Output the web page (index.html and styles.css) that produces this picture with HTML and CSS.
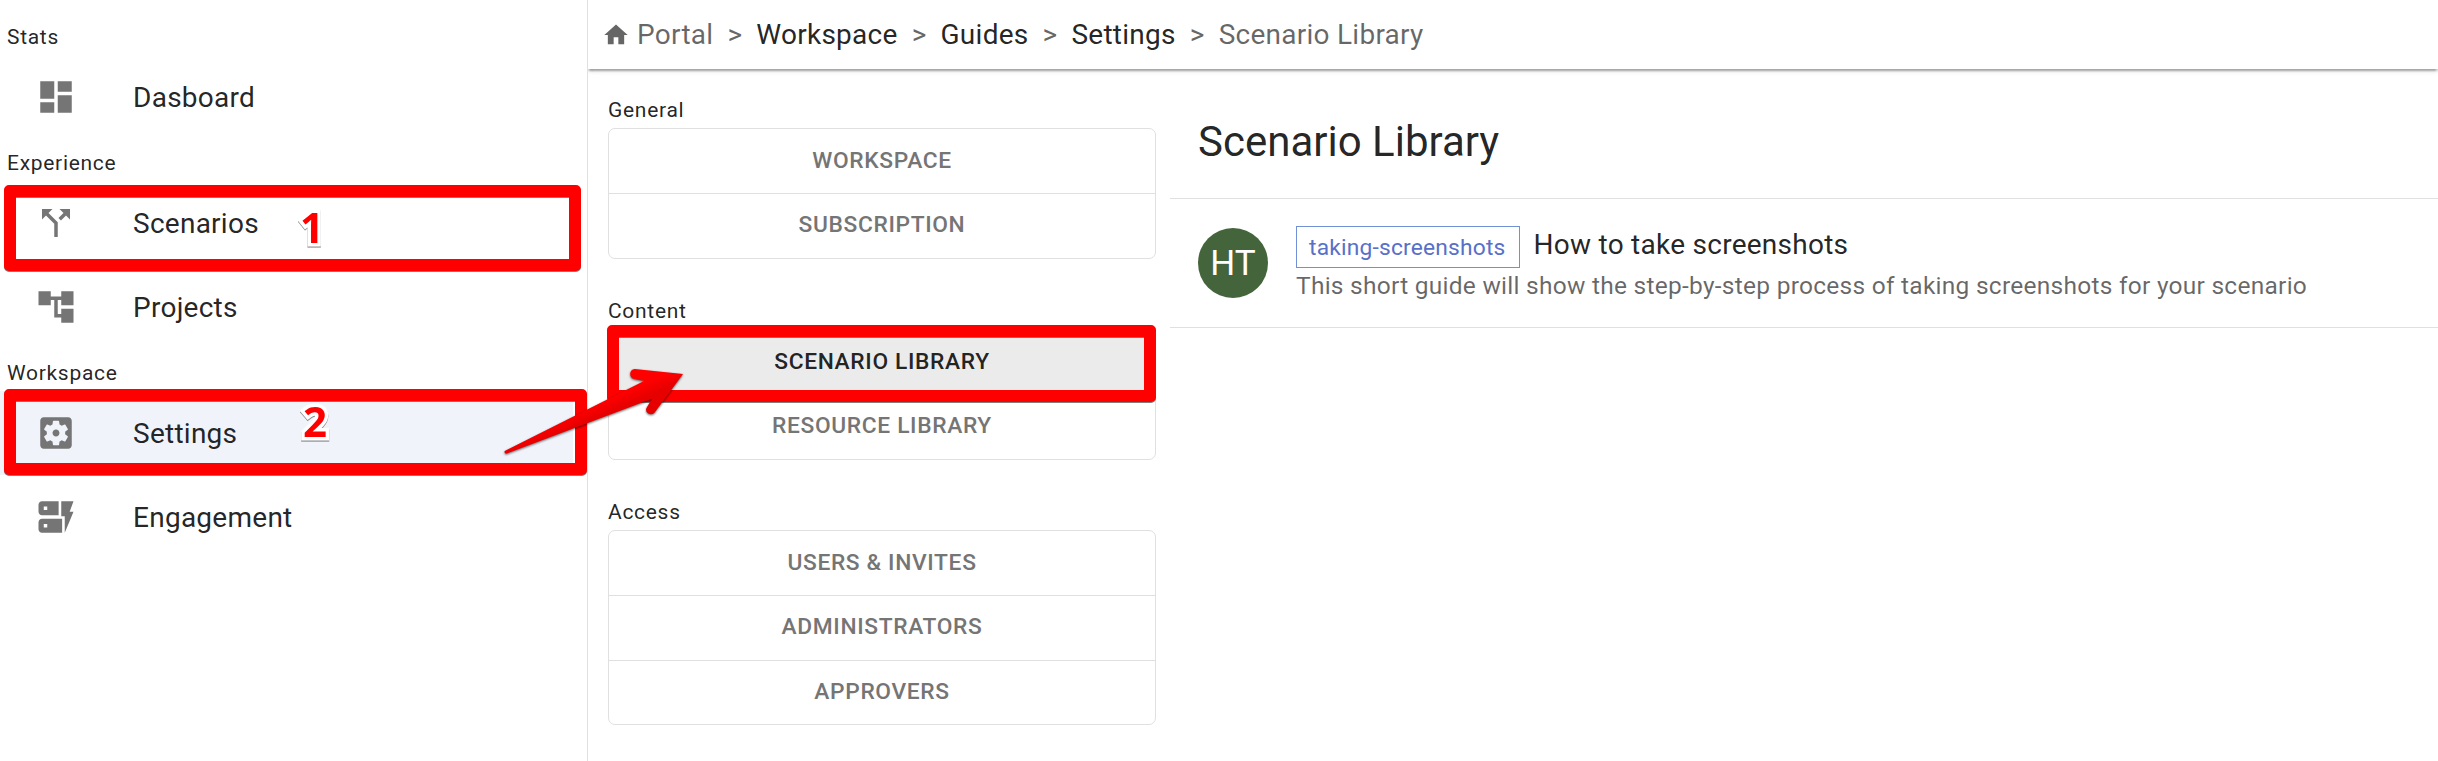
FILE: index.html
```html
<!DOCTYPE html>
<html lang="en">
<head>
<meta charset="utf-8">
<title>Scenario Library</title>
<link rel="stylesheet" href="styles.css">
</head>
<body>
<div class="app">
  <nav class="sidebar">
    <h2 class="side-label">Stats</h2>
    <a class="side-item"><svg class="icon" viewBox="0 0 24 24"><path d="M3 13h8V3H3v10zm0 8h8v-6H3v6zm10 0h8V11h-8v10zm0-18v6h8V3h-8z"/></svg>Dasboard</a>
    <h2 class="side-label">Experience</h2>
    <a class="side-item"><svg class="icon" viewBox="0 0 24 24"><path d="M14 4l2.29 2.29-2.88 2.88 1.42 1.42 2.88-2.88L20 10V4zm-4 0H4v6l2.29-2.29 4.71 4.7V20h2v-8.41l-5.29-5.3z"/></svg>Scenarios</a>
    <a class="side-item"><svg class="icon" viewBox="0 0 24 24"><path d="M22 11V3h-7v3H9V3H2v8h7V8h2v10h4v3h7v-8h-7v3h-2V8h2v3z"/></svg>Projects</a>
    <h2 class="side-label">Workspace</h2>
    <a class="side-item selected"><svg class="icon" viewBox="0 0 24 24"><path d="M12 10c-1.1 0-2 .9-2 2s.9 2 2 2 2-.9 2-2-.9-2-2-2zm7-7H5c-1.11 0-2 .9-2 2v14c0 1.1.89 2 2 2h14c1.11 0 2-.9 2-2V5c0-1.1-.89-2-2-2zm-1.75 9c0 .23-.02.46-.05.68l1.48 1.16c.13.11.17.3.08.45l-1.4 2.42c-.09.15-.27.21-.43.15l-1.74-.7c-.36.28-.76.51-1.18.69l-.26 1.85c-.03.17-.18.3-.35.3h-2.8c-.17 0-.32-.13-.35-.29l-.26-1.85c-.43-.18-.82-.41-1.18-.69l-1.74.7c-.16.06-.34 0-.43-.15l-1.4-2.42c-.09-.15-.05-.34.08-.45l1.48-1.16c-.03-.23-.05-.46-.05-.69 0-.23.02-.46.05-.68l-1.48-1.16c-.13-.11-.17-.3-.08-.45l1.4-2.42c.09-.15.27-.21.43-.15l1.74.7c.36-.28.76-.51 1.18-.69l.26-1.85c.03-.17.18-.3.35-.3h2.8c.17 0 .32.13.35.29l.26 1.85c.43.18.82.41 1.18.69l1.74-.7c.16-.06.34 0 .43.15l1.4 2.42c.09.15.05.34-.08.45l-1.48 1.16c.03.23.05.46.05.69z"/></svg>Settings</a>
    <a class="side-item"><svg class="icon" viewBox="0 0 24 24"><path fill-rule="evenodd" d="M13 11H4c-1.100 0-2-.9-2-2V5c0-1.100.9-2 2-2h9.500v8zM5 6v2h2V6zM15.500 13H4c-1.100 0-2 .9-2 2v4c0 1.100.9 2 2 2h11.500zM5 16v2h2v-2zM22 3h-7v8.500h2V21l5-12h-2.200z"/></svg>Engagement</a>
  </nav>

  <div class="main">
    <header class="topbar">
      <svg class="home" viewBox="0 0 24 24"><path d="M10 20v-6h4v6h5v-8h3L12 3 2 12h3v8z"/></svg>
      <span class="crumb muted">Portal</span><span class="sep">&gt;</span>
      <span class="crumb">Workspace</span><span class="sep">&gt;</span>
      <span class="crumb">Guides</span><span class="sep">&gt;</span>
      <span class="crumb">Settings</span><span class="sep">&gt;</span>
      <span class="crumb muted">Scenario Library</span>
    </header>

    <div class="columns">
      <aside class="menu">
        <section class="group">
          <h3 class="group-label">General</h3>
          <div class="buttons"><button>WORKSPACE</button><button>SUBSCRIPTION</button></div>
        </section>
        <section class="group">
          <h3 class="group-label">Content</h3>
          <div class="buttons"><button class="active">SCENARIO LIBRARY</button><button>RESOURCE LIBRARY</button></div>
        </section>
        <section class="group">
          <h3 class="group-label">Access</h3>
          <div class="buttons"><button>USERS &amp; INVITES</button><button>ADMINISTRATORS</button><button>APPROVERS</button></div>
        </section>
      </aside>

      <main class="content">
        <h1 class="title">Scenario Library</h1>
        <article class="entry">
          <div class="avatar">HT</div>
          <div class="entry-text">
            <div class="entry-head"><span class="chip">taking-screenshots</span><span class="entry-name">How to take screenshots</span></div>
            <p class="entry-desc">This short guide will show the step-by-step process of taking screenshots for your scenario</p>
          </div>
        </article>
      </main>
    </div>
  </div>

  <div class="mark mark-scenarios"></div>
  <div class="mark mark-settings"></div>
  <div class="mark mark-library"></div>
  <span class="step step-one">1</span>
  <span class="step step-two">2</span>
  <svg class="arrow" viewBox="0 0 660 360">
    <defs><linearGradient id="shade" x1="300" y1="140" x2="325" y2="200" gradientUnits="userSpaceOnUse"><stop offset="0.4" stop-color="#ff0000"/><stop offset="1" stop-color="#e60000"/></linearGradient></defs>
    <path fill="url(#shade)" d="M44 303 L462 93 L432 87 C416 83 417 58 434 57 L579 72 L495 186 C487 199 464 192 469 175 L486 146 L48 311 Q42 310 44 303Z"/>
  </svg>
</div>
</body>
</html>
```
FILE: styles.css
```css
* { box-sizing: border-box; }
body { margin: 0; background: #fff; color: rgba(0, 0, 0, 0.87); font-family: Roboto, sans-serif; overflow: hidden; }
h1, h2, h3, p { margin: 0; font-weight: 400; }

.app { position: relative; display: flex; width: 100%; height: 761px; }

.sidebar { width: 588px; flex: none; padding-top: 13px; border-right: 1px solid #e0e0e0; }
.side-label { height: 42px; padding: 6px 0 0 7px; font-size: 21px; line-height: 36px; letter-spacing: 0.7px; }
.side-item { display: flex; align-items: center; gap: 56px; width: 573px; height: 84px; padding-left: 35px; font-size: 28px; letter-spacing: 0.26px; }
.side-item.selected { background: #f1f3fb; }
.icon { width: 42px; height: 42px; fill: #757575; flex: none; }

.main { flex: 1; min-width: 0; display: flex; flex-direction: column; }
.topbar { display: flex; align-items: center; height: 69px; padding-left: 14px; font-size: 28px; letter-spacing: 0.26px; box-shadow: 0 3.5px 1.75px -1.75px rgba(0, 0, 0, 0.2), 0 1.75px 1.75px rgba(0, 0, 0, 0.14), 0 1.75px 5.25px rgba(0, 0, 0, 0.12); clip-path: inset(0 0 -10px 0); }
.home { width: 28px; height: 28px; margin-right: 7px; fill: #666; }
.muted, .sep { color: rgba(0, 0, 0, 0.6); }
.sep { margin: 0 14px; }

.columns { display: flex; flex: 1; }
.menu { width: 568px; flex: none; padding: 23px 0 0 20px; }
.group { height: 201px; }
.group-label { height: 36px; font-size: 21px; line-height: 36px; letter-spacing: 0.7px; }
.buttons { display: flex; flex-direction: column; border: 1px solid #e0e0e0; border-radius: 7px; overflow: hidden; }
.buttons button { height: 64.5px; padding: 0 0 2px; border: 0; border-top: 1px solid #e0e0e0; background: none; color: #757575; font: 500 22.75px Roboto, sans-serif; letter-spacing: 0.65px; }
.buttons button:first-child { height: 64px; border-top: 0; }
.buttons button.active { background: #ebebeb; color: rgba(0, 0, 0, 0.87); }

.content { flex: 1; padding-left: 14px; }
.title { height: 129px; padding-left: 28px; font-size: 42px; line-height: 146px; }
.entry { display: flex; gap: 28px; height: 130px; padding: 27px 0 0 28px; border: 1px solid #e0e0e0; border-width: 1px 0; }
.avatar { width: 70px; height: 70px; margin-top: 2px; border-radius: 50%; background: #44643b; color: #fff; font-size: 35px; line-height: 71px; text-align: center; }
.entry-head { display: flex; gap: 14px; height: 42px; }
.chip { height: 42px; padding: 0 13px 0 12px; border: 1px solid #7090d8; color: #5870c8; font-size: 22.75px; line-height: 41px; letter-spacing: 0.21px; }
.entry-name { font-size: 28px; line-height: 37px; letter-spacing: 0.26px; }
.entry-desc { font-size: 24.5px; line-height: 35px; color: rgba(0, 0, 0, 0.6); letter-spacing: 0.26px; }

/* Walkthrough annotations drawn over the interface */
.mark { position: absolute; border: 12px solid #f00; border-radius: 5px; filter: drop-shadow(0 1px 0 rgba(0, 0, 0, 0.5)); }
.mark-scenarios { left: 4px; top: 185px; width: 577px; height: 86px; }
.mark-settings { left: 4px; top: 389px; width: 583px; height: 86px; }
.mark-library { left: 607px; top: 325px; width: 549px; height: 77px; }
.step { position: absolute; color: #f00; font: 700 42px/48px "Open Sans", sans-serif; -webkit-text-stroke: 7px #fff; paint-order: stroke fill; filter: drop-shadow(0 1px 0.5px rgba(0, 0, 0, 0.5)); }
.step-one { left: 300px; top: 203px; }
.step-two { left: 303px; top: 397px; }
.arrow { position: absolute; left: 490px; top: 350px; width: 220px; height: 120px; filter: drop-shadow(0 1px 1px rgba(0, 0, 0, 0.6)); }
```
